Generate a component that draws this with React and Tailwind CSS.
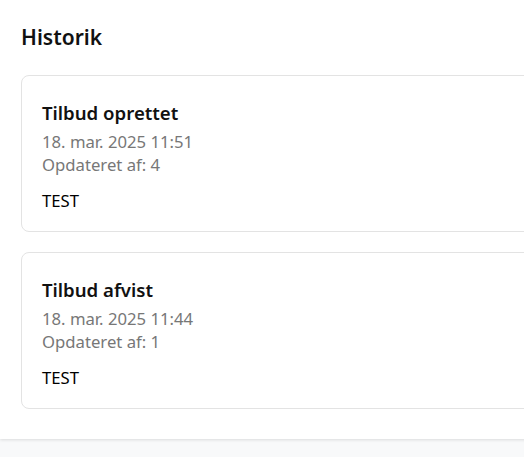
import React from 'react';

const entries = [
  { title: 'Tilbud oprettet', date: '18. mar. 2025 11:51', by: 4, note: 'TEST' },
  { title: 'Tilbud afvist', date: '18. mar. 2025 11:44', by: 1, note: 'TEST' },
];

export default function App() {
  return (
    <div className="min-h-[457px] bg-[#f8f9fa] overflow-hidden font-['Noto_Sans',sans-serif]">
      <section className="w-[640px] bg-white shadow-[0_1px_3px_rgba(0,0,0,0.12)] pl-[21px] pr-[21px] pt-[21px] pb-[30px]">
        <h2 className="text-[21px] leading-[32px] font-semibold text-[#111] mb-[22px]">Historik</h2>

        <div className="flex flex-col gap-[20px]">
          {entries.map((e) => (
            <div
              key={e.date}
              className="h-[157px] rounded-[8px] border border-[#e3e3e3] bg-white px-[20px] pt-[25px]"
            >
              <h3 className="text-[18.6px] leading-[24px] font-semibold text-[#111]">{e.title}</h3>
              <p className="mt-[5px] text-[16.7px] leading-[23px] text-[#777]">{e.date}</p>
              <p className="text-[16.7px] leading-[23px] text-[#777]">Opdateret af: {e.by}</p>
              <p className="mt-[13px] text-[16.7px] leading-[23px] text-black">{e.note}</p>
            </div>
          ))}
        </div>
      </section>
    </div>
  );
}
